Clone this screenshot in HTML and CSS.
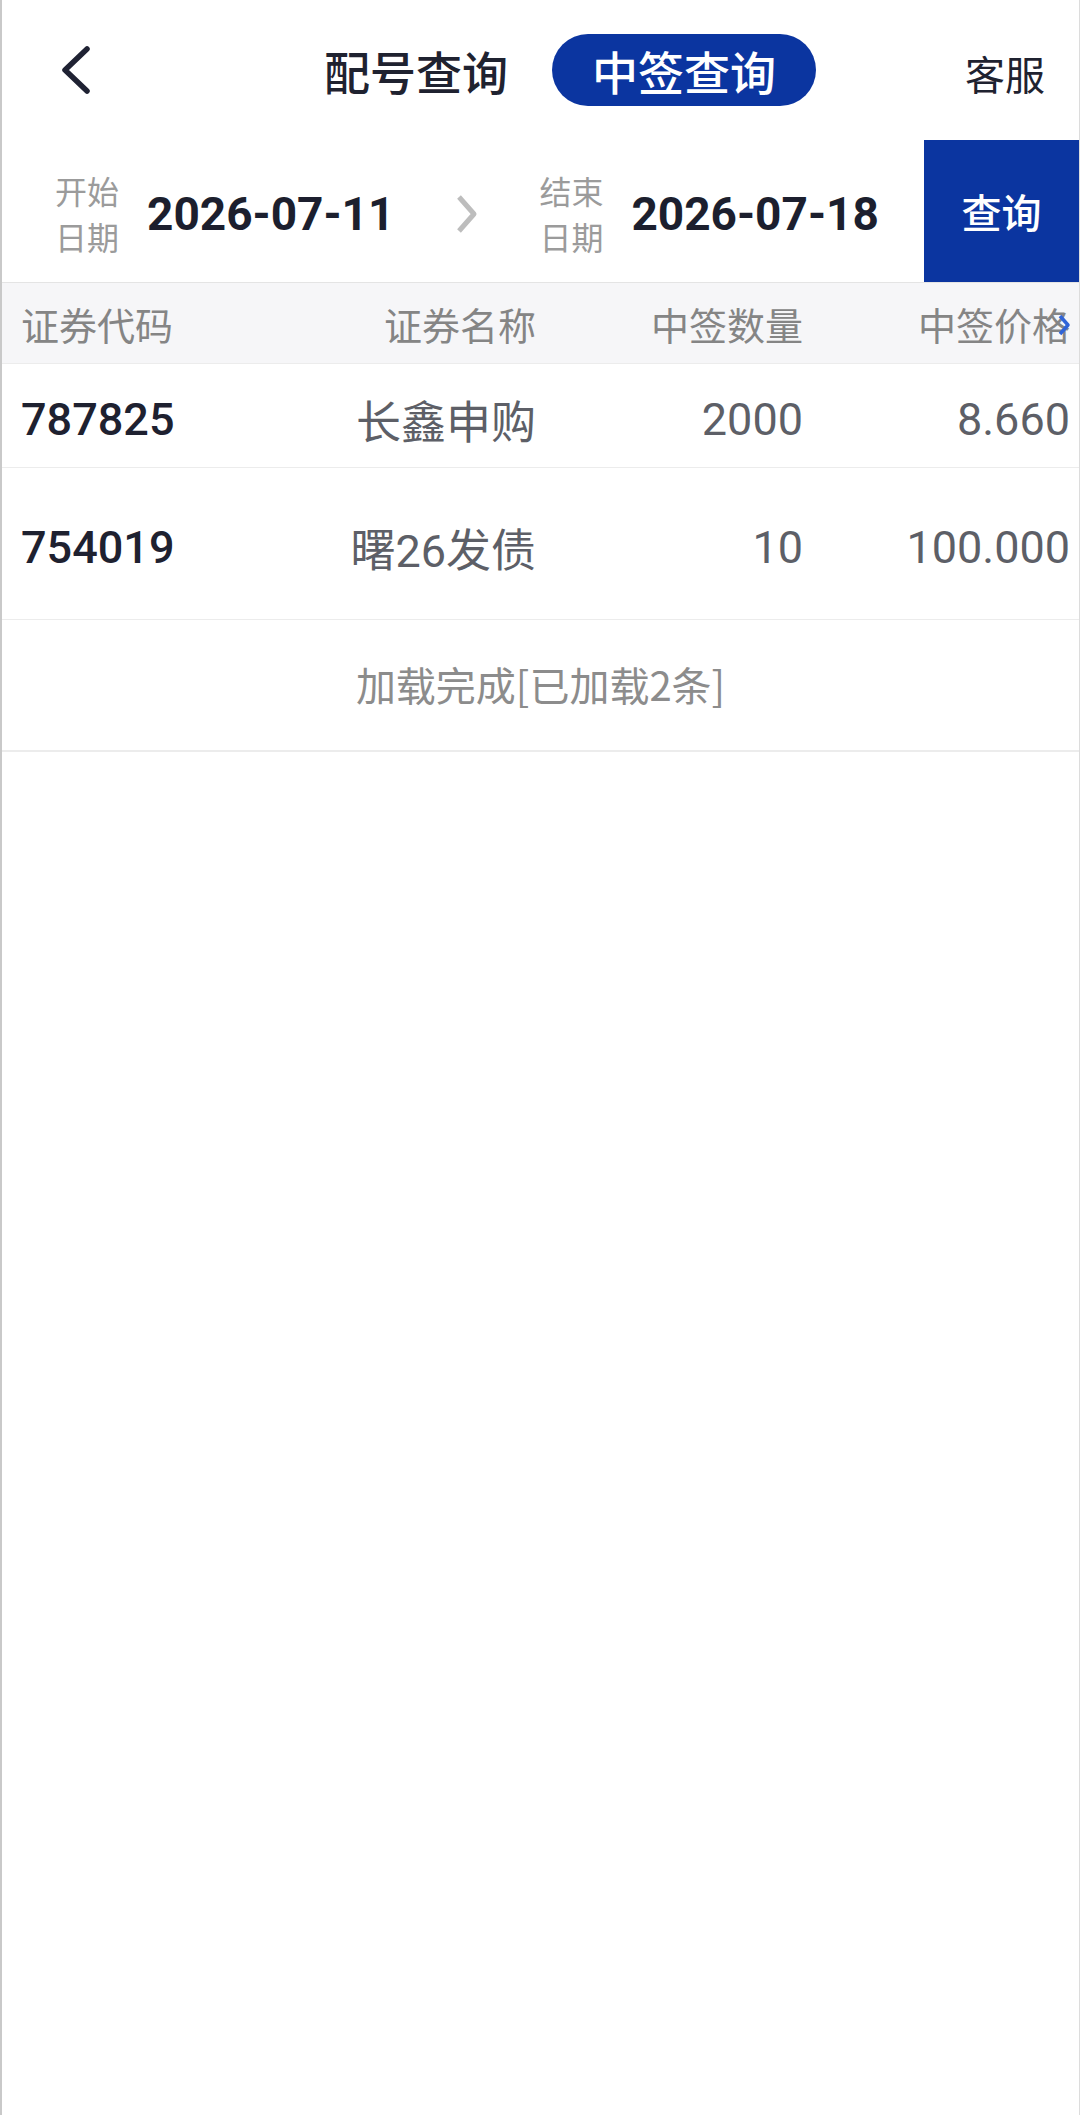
FILE: index.html
```html
<!DOCTYPE html>
<html lang="zh-CN">
  <head>
    <meta charset="UTF-8">
    <meta name="viewport" content="width=device-width, initial-scale=1.0">
    <title>中签查询</title>
    <link rel="stylesheet" href="styles.css">
  </head>
  <body>
    <div class="page">
      <!-- top bar -->
      <div class="nav">
        <svg class="back" width="40" height="60" viewBox="0 0 40 60">
          <polyline points="27,8 5,29 27,50" fill="none" stroke="#1f2233" stroke-width="5.5" stroke-linecap="round" stroke-linejoin="round" />
        </svg>
        <div class="tabs">
          <span class="tab">配号查询</span>
          <span class="tab active">中签查询</span>
        </div>
        <span class="service">客服</span>
      </div>

      <!-- date range -->
      <div class="range">
        <div class="range-label"><div>开始</div><div>日期</div></div>
        <div class="range-date">2026-07-11</div>
        <svg class="range-arrow" width="26" height="42" viewBox="0 0 26 42">
          <polyline points="5,4 20,21 5,38" fill="none" stroke="#bdbdbd" stroke-width="5" stroke-linejoin="round" />
        </svg>
        <div class="range-label"><div>结束</div><div>日期</div></div>
        <div class="range-date">2026-07-18</div>
        <div class="query-btn">查询</div>
      </div>

      <!-- result table -->
      <div class="table-head">
        <span>证券代码</span>
        <span class="right">证券名称</span>
        <span class="right">中签数量</span>
        <span class="right">中签价格</span>
        <svg class="more" width="14" height="24" viewBox="0 0 14 24">
          <polyline points="3,3 11,12 3,21" fill="none" stroke="#2f64d8" stroke-width="3.5" stroke-linejoin="round" />
        </svg>
      </div>
      <div class="row short">
        <span class="code">787825</span>
        <span class="right">长鑫申购</span>
        <span class="right">2000</span>
        <span class="right">8.660</span>
      </div>
      <div class="row tall">
        <span class="code">754019</span>
        <span class="right">曙26发债</span>
        <span class="right">10</span>
        <span class="right">100.000</span>
      </div>
      <div class="loaded">加载完成[已加载2条]</div>
    </div>
  </body>
</html>
```

FILE: styles.css
```css
body{
  margin: 0;
  background-color: #fff;
  font-family: "Noto Sans CJK SC", "Noto Sans", sans-serif;
}
.page{
  min-height: 2115px;
  border-left: 2px solid #c9c9c9;
  border-right: 1px solid #dcdcdc;
  box-sizing: border-box;
}

/* top bar */
.nav{
  display: flex;
  align-items: center;
  height: 140px;
  padding-left: 58px;
  padding-right: 34px;
}
.back{
  display: block;
  margin-top: 2px;
}
.tabs{
  display: flex;
  align-items: center;
  gap: 44px;
  margin-left: 224px;
}
.tab{
  font-size: 46px;
  font-weight: 500;
  color: #1f2230;
}
.tab.active{
  background-color: #0b35a0;
  color: #fff;
  border-radius: 36px;
  padding: 0 40px;
  height: 72px;
  line-height: 72px;
}
.service{
  margin-left: auto;
  font-size: 40px;
  color: #1f2230;
  padding-top: 6px;
}

/* date range */
.range{
  display: flex;
  align-items: center;
  height: 143px;
  padding-left: 53px;
  border-bottom: 1px solid #e4e4e4;
  box-sizing: border-box;
}
.range-label{
  font-size: 32px;
  line-height: 46px;
  color: #9b9b9b;
  margin-right: 28px;
  padding-top: 4px;
}
.range-date{
  font-family: Roboto, "Liberation Sans", sans-serif;
  font-weight: 700;
  font-size: 46px;
  color: #1c1f2e;
  padding-top: 6px;
}
.range-arrow{
  margin-left: 60px;
  margin-right: 59px;
  margin-top: 6px;
}
.query-btn{
  margin-left: auto;
  align-self: stretch;
  width: 155px;
  background-color: #0b35a0;
  color: #fff;
  font-size: 40px;
  font-weight: 500;
  display: flex;
  align-items: center;
  justify-content: center;
}

/* table */
.table-head, .row{
  display: grid;
  grid-template-columns: 271px 244px 267px 267px;
  padding-left: 19px;
  align-items: center;
  border-bottom: 1px solid #ececec;
  box-sizing: border-box;
}
.table-head{
  position: relative;
  height: 81px;
  background-color: #f6f6f8;
  font-size: 38px;
  color: #858585;
}
.right{
  text-align: right;
}
.more{
  position: absolute;
  right: 8px;
  top: 30px;
}
.row{
  font-family: Roboto, "Noto Sans CJK SC", sans-serif;
  font-size: 45px;
  color: #5d5f67;
  padding-top: 8px;
}
.row.short{
  height: 104px;
}
.row.tall{
  height: 152px;
}
.code{
  color: #1e2130;
  font-weight: 500;
}
.loaded{
  height: 132px;
  line-height: 128px;
  text-align: center;
  font-size: 40px;
  color: #8c8c8c;
  border-bottom: 2px solid #ececec;
  box-sizing: border-box;
}
```
